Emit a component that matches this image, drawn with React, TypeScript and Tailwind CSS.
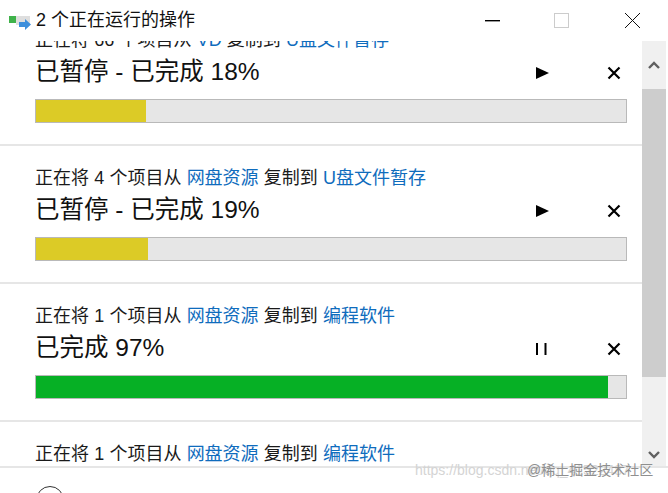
const FONT = "font-['Liberation_Sans','Noto_Sans_CJK_SC',sans-serif]";

const jobs = [
  { from: "VD", count: 66, to: "U盘文件暂存", status: "已暂停 - 已完成 18%", pct: 18.7, paused: true },
  { from: "网盘资源", count: 4, to: "U盘文件暂存", status: "已暂停 - 已完成 19%", pct: 18.9, paused: true },
  { from: "网盘资源", count: 1, to: "编程软件", status: "已完成 97%", pct: 97, paused: false },
  { from: "网盘资源", count: 1, to: "编程软件", status: "", pct: 0, paused: false },
];

function CopyIcon() {
  return (
    <svg width="24" height="20" viewBox="0 0 24 20" className="shrink-0">
      <rect x="8" y="5" width="14" height="9" fill="#dedede" />
      <rect x="1" y="5" width="7" height="7" fill="#3fb24a" />
      <path d="M11 11h6V8l6 5.5-6 5.5v-3h-6z" fill="#3d8fdc" />
    </svg>
  );
}

function StopIcon() {
  return (
    <svg width="14" height="14" viewBox="0 0 14 14">
      <path d="M1.5 1.5l11 11M12.5 1.5l-11 11" stroke="#000" strokeWidth="2.2" fill="none" />
    </svg>
  );
}

function Job({ job }: { job: (typeof jobs)[number] }) {
  return (
    <div className="h-[138px] border-b-2 border-[#e6e6e6] pl-[35px] pr-[15px] pt-[21px]">
      <div className="h-[23px] text-[18px] leading-[22px] text-[#1a1a1a] whitespace-nowrap [word-spacing:0.2px]">
        正在将 {job.count} 个项目从 <span className="text-[#0f6cbd]">{job.from}</span> 复制到{" "}
        <span className="text-[#0f6cbd]">{job.to}</span>
      </div>
      {job.status && (
        <>
          <div className="flex items-center h-[40px]">
            <span className="flex-1 text-[24.5px] text-[#111]">{job.status}</span>
            {job.paused ? (
              <svg width="13" height="12" viewBox="0 0 13 12" className="mr-[58px] mt-[2px]">
                <path d="M0 0l13 6-13 6z" fill="#000" />
              </svg>
            ) : (
              <svg width="11" height="12" viewBox="0 0 11 12" className="mr-[60px] mt-[2px]">
                <path d="M1 0v12M9.5 0v12" stroke="#000" strokeWidth="2" />
              </svg>
            )}
            <span className="mr-[6px] flex mt-[2px]"><StopIcon /></span>
          </div>
          <div className="mt-[7px] h-[24px] border border-[#b9b9b9] bg-[#e6e6e6]">
            <div
              className={`h-full ${job.paused ? "bg-[#dccb26]" : "bg-[#06b025]"}`}
              style={{ width: `${job.pct}%` }}
            />
          </div>
        </>
      )}
    </div>
  );
}

export default function App() {
  return (
    <div className={`relative w-[668px] h-[493px] overflow-hidden bg-white flex flex-col ${FONT}`}>
      <div className="h-[41px] shrink-0 flex items-center pl-[8px]">
        <CopyIcon />
        <span className="ml-[4px] text-[18px] text-[#111] whitespace-nowrap">2 个正在运行的操作</span>
        <div className="flex-1" />
        <svg width="15" height="2" viewBox="0 0 15 2" className="mr-[54px]">
          <rect width="15" height="1.4" fill="#000" />
        </svg>
        <div className="w-[15px] h-[15px] border border-[#ccc] mr-[56px]" />
        <svg width="15" height="15" viewBox="0 0 15 15" className="mr-[28px]">
          <path d="M0 0l15 15M15 0L0 15" stroke="#111" strokeWidth="1" fill="none" />
        </svg>
      </div>

      <div className="h-[425px] flex shrink-0 overflow-hidden">
        <div className="w-[642px] overflow-hidden">
          <div className="-mt-[33px]">
            {jobs.map((j, i) => (
              <Job key={i} job={j} />
            ))}
          </div>
        </div>
        <div className="w-[24px] bg-[#f0f0f0] flex flex-col">
          <div className="h-[48px] flex items-center justify-center">
            <svg width="12" height="8" viewBox="0 0 12 8">
              <path d="M1 7l5-5 5 5" stroke="#606060" strokeWidth="2.4" fill="none" />
            </svg>
          </div>
          <div className="h-[288px] bg-[#cdcdcd]" />
          <div className="flex-1 flex items-end justify-center pb-[7px]">
            <svg width="12" height="8" viewBox="0 0 12 8">
              <path d="M1 1l5 5 5-5" stroke="#606060" strokeWidth="2.4" fill="none" />
            </svg>
          </div>
        </div>
      </div>

      <div className="flex-1 flex items-start gap-[8px] border-t-2 border-[#e6e6e6] pl-[36px] pt-[18px]">
        <div className="w-[28px] h-[28px] shrink-0 rounded-full border border-[#333]" />
        <span className="mt-[5px] text-[18px] leading-[28px] text-[#111]">简略信息</span>
      </div>

      <span className="absolute left-[415px] top-[460px] text-[14px] text-[#d4d4d4] whitespace-nowrap">https://blog.csdn.net/qq_41522487</span>
      <span className="absolute left-[527px] top-[460px] text-[14px] text-[#8f8f8f] whitespace-nowrap">@稀土掘金技术社区</span>
    </div>
  );
}
